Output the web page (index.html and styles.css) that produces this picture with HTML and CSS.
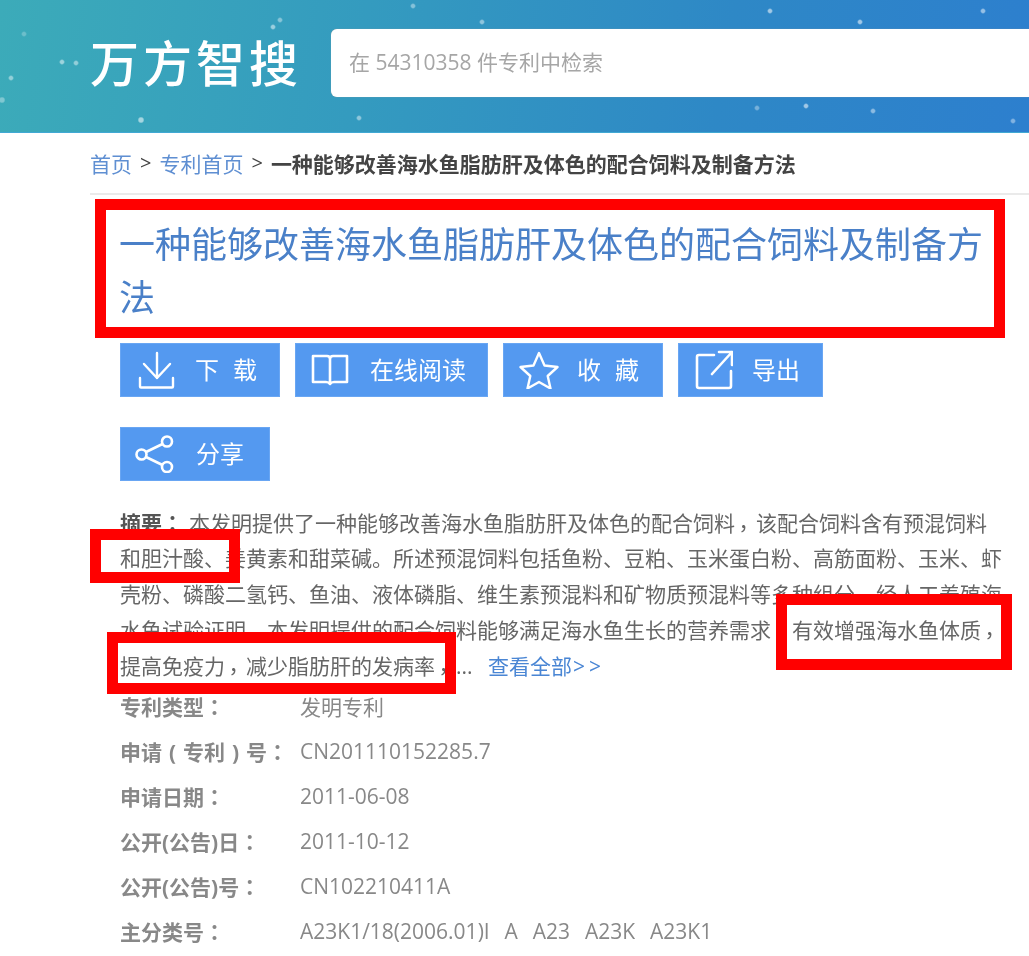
FILE: index.html
```html
<!DOCTYPE html>
<html lang="zh-CN">
<head>
<meta charset="utf-8">
<title>一种能够改善海水鱼脂肪肝及体色的配合饲料及制备方法</title>
<link rel="stylesheet" href="styles.css">
</head>
<body>
<header class="top">
  <div class="logo">万方智搜</div>
  <div class="search"><span class="hint">在 54310358 件专利中检索</span></div>
</header>
<nav class="crumbs">
  <a href="#">首页</a><span class="sep">&gt;</span><a href="#">专利首页</a><span class="sep">&gt;</span><b>一种能够改善海水鱼脂肪肝及体色的配合饲料及制备方法</b>
</nav>
<main class="content">
  <h1 class="title">一种能够改善海水鱼脂肪肝及体色的配合饲料及制备方法</h1>
  <div class="actions">
    <a class="btn btn-down" href="#">
      <svg width="38" height="38" viewBox="0 0 38 38" fill="none" stroke="#fff" stroke-width="2.4" stroke-linecap="round" stroke-linejoin="round"><path d="M19 2v25M6 13l13 14 13-14M2 27v8.500a1 1 0 0 0 1 1h31a1 1 0 0 0 1-1V27"/></svg>
      <span class="wide">下载</span>
    </a>
    <a class="btn btn-read" href="#">
      <svg width="38" height="34" viewBox="0 0 38 34" fill="none" stroke="#fff" stroke-width="2.6" stroke-linejoin="round"><path d="M2 3h14c2 0 3 1 3 3 0-2 1-3 3-3h14v26H23c-2 0-3 .5-4 2-1-1.500-2-2-4-2H2zM19 6v25"/></svg>
      <span>在线阅读</span>
    </a>
    <a class="btn btn-fav" href="#">
      <svg width="40" height="38" viewBox="0 0 40 38" fill="none" stroke="#fff" stroke-width="2.400" stroke-linejoin="round"><path d="M20 2l5.500 12.500 13 1.500-9.800 9 2.800 12.500L20 31l-11.500 6.500L11.300 25l-9.800-9 13-1.500z"/></svg>
      <span class="wide">收藏</span>
    </a>
    <a class="btn btn-out" href="#">
      <svg width="38" height="40" viewBox="0 0 38 40" fill="none" stroke="#fff" stroke-width="2.600" stroke-linecap="round" stroke-linejoin="round"><path d="M19 5H4a2 2 0 0 0-2 2v29a2 2 0 0 0 2 2h30a2 2 0 0 0 2-2V21M17 24L37 2M24 2h13v13"/></svg>
      <span>导出</span>
    </a>
    <a class="btn btn-share" href="#">
      <svg width="40" height="38" viewBox="0 0 40 38" fill="none" stroke="#fff" stroke-width="2.600"><circle cx="32" cy="6.500" r="5"/><circle cx="6.500" cy="19.500" r="5"/><circle cx="32" cy="32" r="5"/><path d="M27.500 9L11 17M11 22l16.500 8"/></svg>
      <span>分享</span>
    </a>
  </div>
  <section class="abstract">
    <div class="line"><b>摘要<span class="p" lang="zh-TW">：</span></b><span class="lead">本发明提供了一种能够改善海水鱼脂肪肝及体色的配合饲料<span class="p comma" lang="zh-TW">，</span>该配合饲料含有预混饲料</span></div>
    <div class="line">和胆汁酸、姜黄素和甜菜碱。所述预混饲料包括鱼粉、豆粕、玉米蛋白粉、高筋面粉、玉米、虾</div>
    <div class="line">壳粉、磷酸二氢钙、鱼油、液体磷脂、维生素预混料和矿物质预混料等多种组分。经人工养殖海</div>
    <div class="line">水鱼试验证明<span class="p comma" lang="zh-TW">，</span>本发明提供的配合饲料能够满足海水鱼生长的营养需求<span class="p comma" lang="zh-TW">，</span>有效增强海水鱼体质<span class="p comma" lang="zh-TW">，</span></div>
    <div class="line">提高免疫力<span class="p comma" lang="zh-TW">，</span>减少脂肪肝的发病率<span class="p comma" lang="zh-TW">，</span>... <a class="more" href="#">查看全部<span class="arrows">&gt;&gt;</span></a></div>
  </section>
  <dl class="meta">
    <div class="row"><dt>专利类型<span class="p" lang="zh-TW">：</span></dt><dd>发明专利</dd></div>
    <div class="row"><dt>申请<span class="paren">(</span>专利<span class="paren">)</span>号<span class="p" lang="zh-TW">：</span></dt><dd>CN201110152285.7</dd></div>
    <div class="row"><dt>申请日期<span class="p" lang="zh-TW">：</span></dt><dd>2011-06-08</dd></div>
    <div class="row"><dt>公开(公告)日<span class="p" lang="zh-TW">：</span></dt><dd>2011-10-12</dd></div>
    <div class="row"><dt>公开(公告)号<span class="p" lang="zh-TW">：</span></dt><dd>CN102210411A</dd></div>
    <div class="row"><dt>主分类号<span class="p" lang="zh-TW">：</span></dt><dd>A23K1/18(2006.01)I&nbsp; A&nbsp; A23&nbsp; A23K&nbsp; A23K1</dd></div>
  </dl>
</main>
<div class="mark mark-title"></div>
<div class="mark mark-a"></div>
<div class="mark mark-b"></div>
<div class="mark mark-c"></div>
</body>
</html>
```

FILE: styles.css
```css
* { box-sizing: border-box; }
html, body { margin: 0; padding: 0; }
body {
  width: 1029px;
  height: 956px;
  overflow: hidden;
  position: relative;
  background: #fff;
  font-family: "Open Sans", "Noto Sans CJK SC", sans-serif;
  color: #666;
}
a { text-decoration: none; }
.top, .crumbs, .content { filter: blur(.35px); }

.top {
  height: 133px;
  display: flex;
  align-items: center;
  padding: 0 0 6px 90px;
  background-color: #3596c0;
  background-image:
    radial-gradient(circle at 62px 62px, rgba(255,255,255,.5) 1.500px, transparent 3px),
    radial-gradient(circle at 76px 63px, rgba(255,255,255,.45) 1.500px, transparent 3px),
    radial-gradient(circle at 11px 78px, rgba(255,255,255,.45) 1.500px, transparent 3px),
    radial-gradient(circle at 141px 120px, rgba(255,255,255,.55) 2px, transparent 3.500px),
    radial-gradient(circle at 273px 27px, rgba(255,255,255,.5) 1.500px, transparent 3px),
    radial-gradient(circle at 280px 20px, rgba(255,255,255,.4) 1.500px, transparent 3px),
    radial-gradient(circle at 359px 118px, rgba(255,255,255,.45) 1.500px, transparent 3px),
    radial-gradient(circle at 482px 22px, rgba(255,255,255,.45) 1.500px, transparent 3px),
    radial-gradient(circle at 413px 6px, rgba(255,255,255,.4) 1.500px, transparent 3px),
    radial-gradient(circle at 24px 34px, rgba(255,255,255,.25) 1.500px, transparent 3px),
    radial-gradient(circle at 2px 100px, rgba(255,255,255,.35) 2px, transparent 3.500px),
    radial-gradient(circle at 770px 11px, rgba(255,255,255,.55) 1.500px, transparent 3px),
    radial-gradient(circle at 860px 22px, rgba(255,255,255,.55) 1.500px, transparent 3px),
    radial-gradient(circle at 983px 11px, rgba(255,255,255,.5) 1.500px, transparent 3px),
    radial-gradient(circle at 806px 106px, rgba(255,255,255,.55) 1.500px, transparent 3px),
    radial-gradient(circle at 873px 111px, rgba(255,255,255,.45) 1.500px, transparent 3px),
    radial-gradient(circle at 1013px 121px, rgba(255,255,255,.4) 1.500px, transparent 3px),
    radial-gradient(circle at 757px 108px, rgba(255,255,255,.35) 1.500px, transparent 3px),
    linear-gradient(100deg, #3cabb9 0%, #349bbf 35%, #2e88c6 70%, #2d7fce 100%);
  border-bottom: 1px solid #41a9d4;
}
.logo {
  width: 241px;
  flex: none;
  font-size: 49px;
  line-height: 60px;
  letter-spacing: 4px;
  margin-top: -4px;
  color: #fff;
  font-family: "Noto Sans CJK SC", sans-serif;
  font-weight: 500;
}
.search {
  flex: 1;
  height: 68px;
  background: #fff;
  border-radius: 6px 0 0 6px;
  box-shadow: 0 0 1px #a9a29c;
  padding-left: 18px;
  display: flex;
  align-items: center;
  font-size: 21px;
  color: #a6a6a6;
}
.hint { padding-bottom: 4px; }

.crumbs {
  height: 62px;
  margin-left: 90px;
  border-bottom: 2px solid #eaeaea;
  display: flex;
  align-items: center;
  padding-bottom: 1px;
  font-size: 21px;
  color: #444;
}
.crumbs a { color: #5f8fd2; }
.crumbs .sep { margin: 0 8px; font-size: 20px; color: #444; }
.crumbs b { font-size: 21px; font-weight: 700; color: #444; }

.content { padding: 23px 0 0 120px; }
.title {
  margin: 0 0 0 -1px;
  width: 880px;
  font-size: 36px;
  line-height: 53px;
  font-weight: 400;
  color: #4a80c8;
}
.actions {
  margin-top: 19px;
  display: flex;
  flex-wrap: wrap;
  gap: 30px 15px;
  width: 880px;
}
.btn {
  height: 54px;
  display: flex;
  align-items: center;
  background: #5499f0;
  color: #fff;
  font-size: 24px;
  font-family: "Noto Sans CJK SC", sans-serif;
  border: 1px solid #69a6f3;
}
.btn svg { flex: none; }
.btn span { padding-bottom: 3px; }
.btn-down { width: 160px; padding-left: 17px; gap: 19px; }
.btn-read { width: 193px; padding-left: 15px; gap: 21px; }
.btn-fav { width: 160px; padding-left: 15px; gap: 18px; }
.btn-out { width: 145px; padding-left: 16px; gap: 19px; }
.btn-share { width: 150px; padding-left: 14px; gap: 21px; margin-right: 700px; }
.wide { letter-spacing: 14px; }

.abstract { margin-top: 23px; width: 900px; font-size: 21px; line-height: 36px; }
.line { white-space: nowrap; height: 36px; }
.abstract b { color: #555; font-weight: 700; }
.lead { margin-left: 6px; }
.p { font-family: "Noto Sans CJK TC", sans-serif; }
.comma { vertical-align: -5px; margin: 0 2px 0 -2px; }
.paren { display: inline-block; width: 21px; text-align: center; }
.more { color: #4a86d4; margin-left: 10px; }
.arrows { letter-spacing: 4px; margin-left: 1px; }

.meta { margin: -1px 0 0; }
.row { display: flex; height: 45px; align-items: center; font-size: 21px; }
.row dt { width: 180px; font-weight: 700; color: #888; white-space: nowrap; }
.row dd { margin: 0; color: #888; word-spacing: 2px; }

.mark { position: absolute; border: 11px solid #f00; }
.mark-title { left: 95px; top: 199px; width: 910px; height: 139px; }
.mark-a { left: 90px; top: 529px; width: 150px; height: 54px; }
.mark-b { left: 107px; top: 632px; width: 349px; height: 62px; }
.mark-c { left: 776px; top: 594px; width: 236px; height: 76px; }
```
